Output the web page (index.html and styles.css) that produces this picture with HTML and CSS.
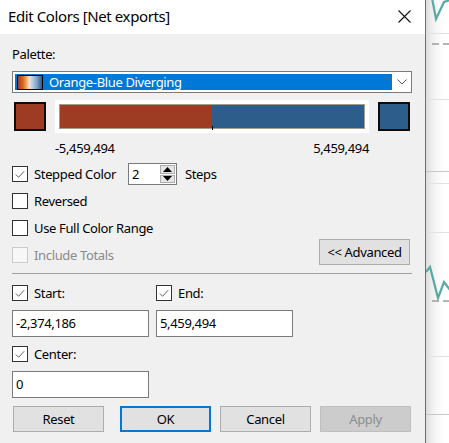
FILE: index.html
```html
<!DOCTYPE html>
<html>
<head>
<meta charset="utf-8">
<title>Edit Colors</title>
<link rel="stylesheet" href="styles.css">
</head>
<body>
<div class="screen">
  <div class="dialog">
    <div class="titlebar">
      <span class="title">Edit Colors [Net exports]</span>
      <svg class="close" width="13" height="13" viewBox="0 0 13 13"><path d="M0.5 0.5L12.5 12.5M12.5 0.5L0.5 12.5" stroke="#111" stroke-width="1.1"/></svg>
    </div>
    <div class="body">
      <div class="label-row">Palette:</div>
      <div class="select">
        <div class="select-value">
          <span class="pal-icon"></span>
          <span class="select-text">Orange-Blue Diverging</span>
        </div>
        <div class="select-arrow">
          <svg width="10" height="6" viewBox="0 0 10 6"><path d="M0.5 0.5L5 5L9.5 0.5" fill="none" stroke="#555" stroke-width="1"/></svg>
        </div>
      </div>
      <div class="color-row">
        <div class="swatch swatch-start"></div>
        <div class="ramp-panel">
          <div class="ramp">
            <div class="ramp-left"></div>
            <div class="ramp-right"></div>
            <span class="tick"></span>
          </div>
        </div>
        <div class="swatch swatch-end"></div>
      </div>
      <div class="range-labels"><span>-5,459,494</span><span>5,459,494</span></div>

      <div class="check-row row-stepped">
        <span class="cb"><svg width="15" height="15" viewBox="0 0 15 15"><path d="M3 7.5L6 10.5L12 4" fill="none" stroke="#555" stroke-width="1"/></svg></span>
        <span class="cb-label">Stepped Color</span>
        <div class="spin">
          <span class="spin-value">2</span>
          <div class="spin-btns">
            <span class="spin-btn"><svg width="9" height="5" viewBox="0 0 9 5"><path d="M0 5L4.5 0L9 5Z" fill="#000"/></svg></span>
            <span class="spin-btn"><svg width="9" height="5" viewBox="0 0 9 5"><path d="M0 0L4.5 5L9 0Z" fill="#000"/></svg></span>
          </div>
        </div>
        <span class="cb-label steps">Steps</span>
      </div>

      <div class="check-row row-plain">
        <span class="cb"></span>
        <span class="cb-label">Reversed</span>
      </div>

      <div class="check-row row-plain">
        <span class="cb"></span>
        <span class="cb-label">Use Full Color Range</span>
      </div>

      <div class="adv-row">
        <div class="check-row row-disabled">
          <span class="cb cb-disabled"></span>
          <span class="cb-label label-disabled">Include Totals</span>
        </div>
        <button class="btn btn-adv">&lt;&lt; Advanced</button>
      </div>

      <div class="separator"></div>

      <div class="pair-row">
        <div class="check-row col">
          <span class="cb"><svg width="15" height="15" viewBox="0 0 15 15"><path d="M3 7.5L6 10.5L12 4" fill="none" stroke="#555" stroke-width="1"/></svg></span>
          <span class="cb-label">Start:</span>
        </div>
        <div class="check-row col">
          <span class="cb"><svg width="15" height="15" viewBox="0 0 15 15"><path d="M3 7.5L6 10.5L12 4" fill="none" stroke="#555" stroke-width="1"/></svg></span>
          <span class="cb-label">End:</span>
        </div>
      </div>

      <div class="pair-row inputs">
        <div class="field">-2,374,186</div>
        <div class="field">5,459,494</div>
      </div>

      <div class="check-row row-center">
        <span class="cb"><svg width="15" height="15" viewBox="0 0 15 15"><path d="M3 7.5L6 10.5L12 4" fill="none" stroke="#555" stroke-width="1"/></svg></span>
        <span class="cb-label">Center:</span>
      </div>

      <div class="pair-row inputs center-input">
        <div class="field">0</div>
      </div>

      <div class="button-row">
        <button class="btn btn-reset">Reset</button>
        <button class="btn btn-default">OK</button>
        <button class="btn btn-cancel">Cancel</button>
        <button class="btn btn-disabled">Apply</button>
      </div>
    </div>
  </div>

  <div class="backdrop">
    <span class="hline" style="top:33px"></span>
    <span class="dline" style="top:43px"></span>
    <span class="hline" style="top:99px"></span>
    <span class="hline dark" style="top:171px"></span>
    <span class="hline" style="top:183px"></span>
    <span class="hline" style="top:232px"></span>
    <span class="dline" style="top:300px"></span>
    <span class="hline" style="top:356px"></span>
    <span class="hline dark" style="top:414px"></span>
    <svg class="chart" width="24" height="443" viewBox="0 0 24 443">
      <polyline points="6,-2 10,19 18,2 24,0" fill="none" stroke="#5aa9a3" stroke-width="2.2"/>
      <polyline points="0,272 4,267 12,298 18,282 24,290" fill="none" stroke="#5aa9a3" stroke-width="2.2"/>
    </svg>
  </div>
</div>
</body>
</html>
```

FILE: styles.css
```css
html, body {
  margin: 0;
  padding: 0;
}

body {
  font-family: "Noto Sans", "Open Sans", sans-serif;
  font-size: 13px;
  letter-spacing: -0.35px;
  color: #000;
  background: #fff;
}

.screen {
  display: flex;
  width: 449px;
  height: 443px;
  overflow: hidden;
}

.dialog {
  width: 425px;
  flex: none;
  border-right: 1px solid #6e6e6e;
  background: #f0f0f0;
  display: flex;
  flex-direction: column;
}

.titlebar {
  height: 34px;
  background: #fff;
  display: flex;
  align-items: center;
  justify-content: space-between;
  padding: 0 14px 0 8px;
}

.title {
  font-size: 15px;
  letter-spacing: -0.4px;
  line-height: 20px;
  margin-top: -2px;
}

.close {
  margin-top: -1px;
}

.body {
  padding: 0 12px;
  display: flex;
  flex-direction: column;
}

.label-row {
  margin-top: 11px;
  height: 19px;
  line-height: 19px;
}

.select {
  margin-top: 7px;
  width: 400px;
  height: 22px;
  box-sizing: border-box;
  border: 1px solid #7a7a7a;
  background: #fff;
  display: flex;
  align-items: stretch;
  padding: 2px 0 2px 2px;
}

.select-value {
  flex: 1;
  background: #0078d7;
  display: flex;
  align-items: center;
  padding-left: 2px;
}

.pal-icon {
  width: 26px;
  height: 15px;
  box-sizing: border-box;
  border: 1px solid #000;
  background: linear-gradient(to right, #9e3d22 0%, #d8641f 20%, #f0a25c 34%, #f1e4d6 47%, #b7cfe4 60%, #7fa5c8 78%, #2b5c8a 100%);
}

.select-text {
  color: #fff;
  margin-left: 6px;
  line-height: 16px;
}

.select-arrow {
  width: 19px;
  display: flex;
  align-items: center;
  justify-content: center;
}

.color-row {
  margin-top: 7px;
  height: 33px;
  display: flex;
  align-items: center;
}

.swatch {
  width: 32px;
  height: 29px;
  box-sizing: border-box;
  border: 2px solid #0c0c0c;
}

.swatch-start {
  margin-left: 2px;
  background: #9d3c22;
}

.swatch-end {
  margin-left: 9px;
  background: #2d5d8a;
}

.ramp-panel {
  margin-left: 9px;
  width: 314px;
  height: 33px;
  box-sizing: border-box;
  background: #fff;
  padding: 4px;
}

.ramp {
  position: relative;
  height: 25px;
  box-sizing: border-box;
  border: 1px solid #a39d8c;
  display: flex;
}

.ramp-left {
  width: 152px;
  background: #9d3c22;
}

.ramp-right {
  flex: 1;
  background: #2d5d8a;
}

.tick {
  position: absolute;
  left: 152px;
  bottom: -2px;
  width: 1px;
  height: 4px;
  background: #000;
}

.range-labels {
  margin-top: 6px;
  margin-left: 43px;
  width: 314px;
  height: 19px;
  line-height: 19px;
  display: flex;
  justify-content: space-between;
}

.check-row {
  display: flex;
  align-items: center;
  height: 22px;
}

.row-stepped {
  margin-top: 5px;
}

.row-plain {
  margin-top: 5px;
}

.cb {
  width: 16px;
  height: 16px;
  box-sizing: border-box;
  border: 1px solid #333;
  background: #fff;
  flex: none;
  display: flex;
  align-items: center;
  justify-content: center;
}

.cb-disabled {
  border-color: #cccccc;
  background: #f7f7f7;
}

.cb-label {
  margin-left: 6px;
  line-height: 18px;
}

.label-disabled {
  color: #8a8a8a;
}

.spin {
  margin-left: 12px;
  width: 49px;
  height: 22px;
  box-sizing: border-box;
  border: 1px solid #7a7a7a;
  background: #fff;
  display: flex;
}

.spin-value {
  flex: 1;
  padding-left: 3px;
  line-height: 20px;
}

.spin-btns {
  width: 15px;
  display: flex;
  flex-direction: column;
  padding: 1px 1px 1px 0;
  gap: 1px;
}

.spin-btn {
  flex: 1;
  box-sizing: border-box;
  border: 1px solid #adadad;
  background: #e5e5e5;
  display: flex;
  align-items: center;
  justify-content: center;
}

.steps {
  margin-left: 8px;
}

.adv-row {
  width: 398px;
  height: 26px;
  display: flex;
  justify-content: space-between;
  align-items: flex-start;
}

.row-disabled {
  margin-top: 5px;
}

.btn {
  font-family: inherit;
  font-size: 13px;
  letter-spacing: -0.35px;
  color: #000;
  width: 91px;
  height: 26px;
  box-sizing: border-box;
  border: 1px solid #adadad;
  background: #e1e1e1;
  padding: 0;
  margin: 0;
  line-height: 22px;
}

.separator {
  margin-top: 8px;
  width: 400px;
  height: 1px;
  background: #a0a0a0;
}

.pair-row {
  display: flex;
  gap: 7px;
}

.pair-row .col {
  width: 137px;
  margin-top: 8px;
}

.inputs {
  margin-top: 6px;
}

.field {
  width: 137px;
  height: 27px;
  box-sizing: border-box;
  border: 1px solid #7a7a7a;
  background: #fff;
  padding-left: 3px;
  line-height: 25px;
}

.row-center {
  margin-top: 6px;
}

.center-input {
  margin-top: 6px;
}

.button-row {
  margin-top: 8px;
  display: flex;
}

.btn-reset {
  margin-left: 1px;
}

.btn-default {
  margin-left: 16px;
  border: 2px solid #0078d7;
}

.btn-cancel {
  margin-left: 9px;
}

.btn-disabled {
  margin-left: 9px;
  background: #cccccc;
  border-color: #bfbfbf;
  color: #8d8d8d;
}

.backdrop {
  flex: 1;
  position: relative;
  background: linear-gradient(to right, #dcdcdc 0px, #ececec 5px, #f8f8f8 11px, #ffffff 18px);
}

.hline {
  position: absolute;
  left: 0;
  right: 0;
  height: 1px;
  background: #e2e2e2;
}

.hline.dark {
  background: #c8c8c8;
}

.dline {
  position: absolute;
  left: 6px;
  right: 0;
  height: 2px;
  background: repeating-linear-gradient(to right, #b4b4b4 0 7px, transparent 7px 11px);
}

.chart {
  position: absolute;
  left: 0;
  top: 0;
}
```
